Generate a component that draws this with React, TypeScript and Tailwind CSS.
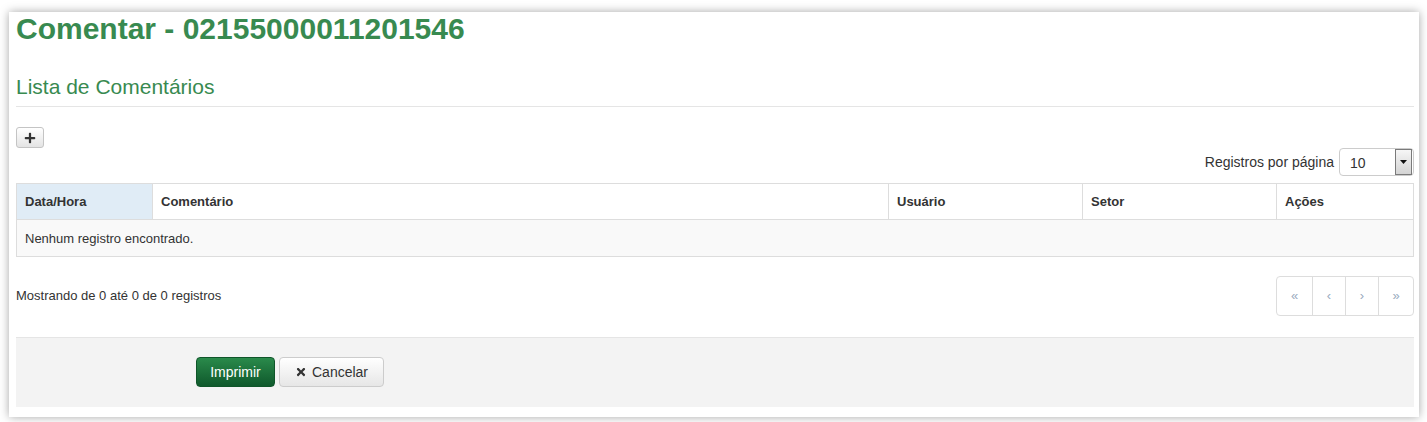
import React from "react"
import { FaPlus, FaTimes } from "react-icons/fa"

const columns = [
  { label: "Data/Hora", width: "w-[136px]", sorted: true },
  { label: "Comentário", width: "w-[736px]" },
  { label: "Usuário", width: "w-[194px]" },
  { label: "Setor", width: "w-[194px]" },
  { label: "Ações", width: "flex-1", last: true },
]

const pages = [
  { glyph: "«", width: "w-[35px]" },
  { glyph: "‹", width: "w-[33px]" },
  { glyph: "›", width: "w-[33px]" },
  { glyph: "»", width: "w-[35px]" },
]

function PageSizeSelect() {
  return (
    <div className="flex h-[28px] w-[75px] items-center rounded-[4px] border border-[#cccccc] bg-white pl-[10px] pr-px">
      <span className="flex-1 pt-[3px] text-[14px] text-[#333]">10</span>
      <div className="flex h-[26px] w-[17px] items-center justify-center border border-[#7a7a7a] bg-gradient-to-b from-[#f6f6f6] to-[#d4d4d4]">
        <svg width="7" height="4" viewBox="0 0 7 4">
          <path d="M0 0h7L3.5 4z" fill="#111" />
        </svg>
      </div>
    </div>
  )
}

export default function App() {
  return (
    <div className="min-h-[422px] bg-white pl-[9px] pt-[8px] font-['Liberation_Sans',Arial,sans-serif] text-[#333]">
      <div className="h-[405px] w-[1410px] bg-white pl-[7px] pr-[5px] shadow-[0_0_9px_rgba(0,0,0,0.35)]">
        <h1 className="mt-[4px] text-[30px] font-bold leading-[33px] text-[#388a50]">
          Comentar - 02155000011201546
        </h1>

        <h3 className="mt-[30px] border-b border-[#e5e5e5] pb-[8px] text-[21px] leading-[23px] text-[#388a50]">
          Lista de Comentários
        </h3>

        <button className="mt-[20px] flex h-[21px] w-[28px] items-center justify-center rounded-[3px] border border-[#c4c4c4] bg-gradient-to-b from-white to-[#e4e4e4]">
          <FaPlus className="h-[12px] w-[12px] text-[#333]" />
        </button>

        <div className="flex items-center justify-end gap-[5px]">
          <span className="text-[14px]">Registros por página</span>
          <PageSizeSelect />
        </div>

        <div className="mt-[7px] border border-[#dddddd] text-[13px]">
          <div className="flex h-[36px] border-b border-[#dddddd] font-bold">
            {columns.map((c) => (
              <div
                key={c.label}
                className={`${c.width} flex items-center px-[8px] pt-px ${c.last ? "" : "border-r border-[#dddddd]"} ${c.sorted ? "bg-[#e0ecf6]" : "bg-white"}`}
              >
                {c.label}
              </div>
            ))}
          </div>
          <div className="flex h-[36px] items-center bg-[#f9f9f9] px-[8px] pt-[2px]">Nenhum registro encontrado.</div>
        </div>

        <div className="mt-[19px] flex items-center justify-between">
          <span className="text-[13px]">Mostrando de 0 até 0 de 0 registros</span>
          <div className="flex h-[40px] rounded-[4px] border border-[#dddddd] bg-white">
            {pages.map((p, i) => (
              <div
                key={i}
                className={`${p.width} flex items-center justify-center text-[13px] text-[#9aabbe] ${i > 0 ? "border-l border-[#dddddd]" : ""}`}
              >
                {p.glyph}
              </div>
            ))}
          </div>
        </div>

        <div className="mt-[21px] flex h-[70px] items-start gap-[4px] border-t border-[#e5e5e5] bg-[#f3f3f3] pl-[180px] pt-[19px]">
          <button className="h-[30px] w-[79px] rounded-[4px] border border-[#0f5529] bg-gradient-to-b from-[#2a8a4b] to-[#0f592c] text-[14px] text-white">
            Imprimir
          </button>
          <button className="flex h-[30px] w-[105px] items-center justify-center gap-[5px] rounded-[4px] border border-[#cccccc] bg-gradient-to-b from-white to-[#e6e6e6] text-[14px] text-[#333]">
            <FaTimes className="h-[12px] w-[12px]" />
            Cancelar
          </button>
        </div>
      </div>
    </div>
  )
}
